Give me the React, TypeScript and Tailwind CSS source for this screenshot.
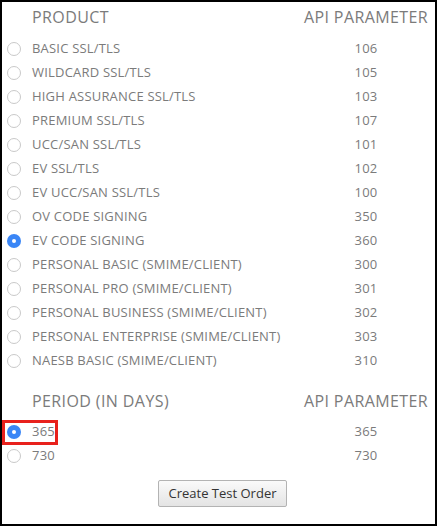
import React, { useState } from 'react';

const PRODUCTS: [string, number][] = [
  ['BASIC SSL/TLS', 106],
  ['WILDCARD SSL/TLS', 105],
  ['HIGH ASSURANCE SSL/TLS', 103],
  ['PREMIUM SSL/TLS', 107],
  ['UCC/SAN SSL/TLS', 101],
  ['EV SSL/TLS', 102],
  ['EV UCC/SAN SSL/TLS', 100],
  ['OV CODE SIGNING', 350],
  ['EV CODE SIGNING', 360],
  ['PERSONAL BASIC (SMIME/CLIENT)', 300],
  ['PERSONAL PRO (SMIME/CLIENT)', 301],
  ['PERSONAL BUSINESS (SMIME/CLIENT)', 302],
  ['PERSONAL ENTERPRISE (SMIME/CLIENT)', 303],
  ['NAESB BASIC (SMIME/CLIENT)', 310],
];

const PERIODS = [365, 730];

const Radio = ({ checked, onClick }: { checked: boolean; onClick: () => void }) => (
  <button
    onClick={onClick}
    className={`w-[14px] h-[14px] rounded-full flex items-center justify-center ${checked ? 'bg-[#3a86f6]' : 'border border-[#c9c9c9] bg-white'}`}
  >
    {checked && <span className="w-[4px] h-[4px] rounded-full bg-white" />}
  </button>
);

const Header = ({ title }: { title: string }) => (
  <div className="grid grid-cols-[30px_1fr_128px] h-6 items-center text-[16px] tracking-[0.4px] text-[#7b7b7b]">
    <span />
    <span>{title}</span>
    <span className="text-center">API PARAMETER</span>
  </div>
);

export default function App() {
  const [product, setProduct] = useState(360);
  const [period, setPeriod] = useState(365);

  return (
    <div
      className="w-[437px] h-[526px] border-2 border-black bg-white pt-[3px] pr-[5px]"
      style={{ fontFamily: '"Open Sans", sans-serif' }}
    >
      <Header title="PRODUCT" />
      <div className="mt-2">
        {PRODUCTS.map(([name, code]) => (
          <div key={code} className="grid grid-cols-[30px_1fr_128px] h-6 items-center text-[13px] tracking-[0.2px] text-[#7b7b7b]">
            <div className="flex pl-[5px]">
              <Radio checked={product === code} onClick={() => setProduct(code)} />
            </div>
            <span>{name}</span>
            <span className="text-center">{code}</span>
          </div>
        ))}
      </div>

      <div className="mt-4">
        <Header title="PERIOD (IN DAYS)" />
      </div>
      <div className="mt-[7px]">
        {PERIODS.map((p) => (
          <div key={p} className="relative grid grid-cols-[30px_1fr_128px] h-6 items-center text-[13px] tracking-[0.2px] text-[#7b7b7b]">
            <div className="flex pl-[5px]">
              <Radio checked={period === p} onClick={() => setPeriod(p)} />
            </div>
            <span>{p}</span>
            <span className="text-center">{p}</span>
            {p === 365 && (
              <div className="absolute left-0 top-0 w-[56px] h-[25px] border-[3px] border-[#e8211c] pointer-events-none" />
            )}
          </div>
        ))}
      </div>

      <div className="mt-3 flex justify-center pl-[13px]">
        <button className="w-[129px] h-[27px] text-[13px] text-[#333] border border-[#b3b3b3] rounded-[2px] bg-gradient-to-b from-[#fafafa] to-[#e4e4e4]">
          Create Test Order
        </button>
      </div>
    </div>
  );
}
